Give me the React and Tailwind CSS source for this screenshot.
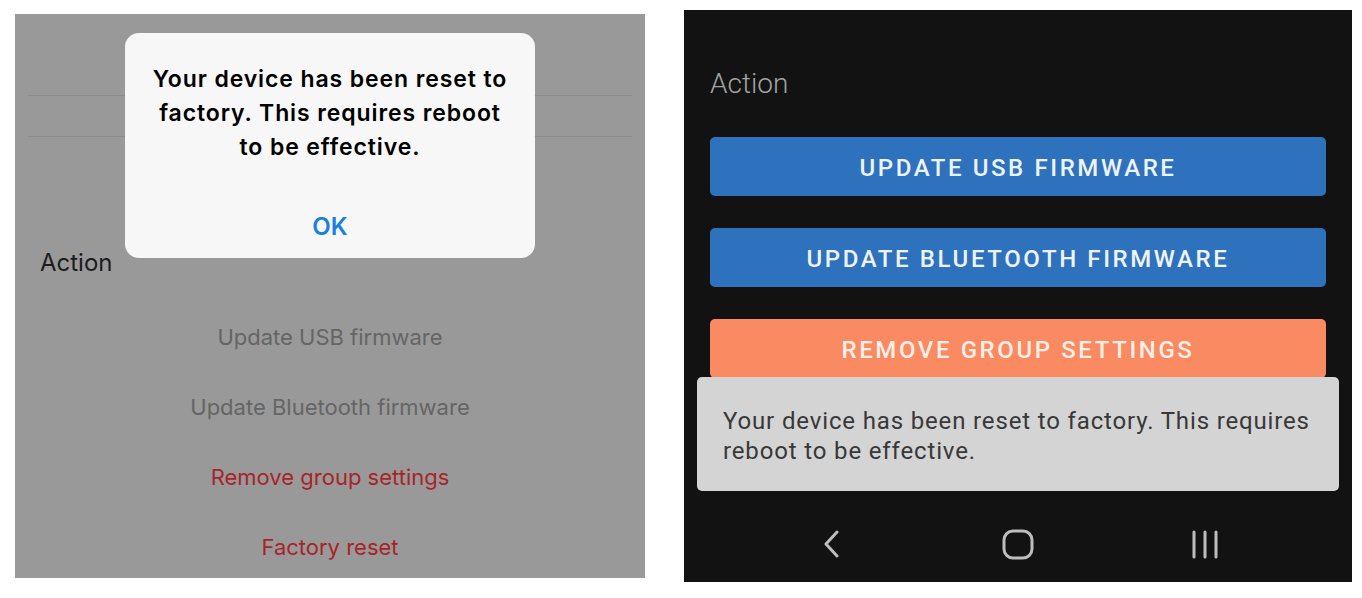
import React from 'react';

const iosFont = { fontFamily: 'Inter, "Liberation Sans", sans-serif' };
const androidFont = { fontFamily: 'Roboto, "Liberation Sans", sans-serif' };

// iOS screenshot: settings list dimmed behind an alert
const IosPanel = () => {
  const items = [
    { label: 'Update USB firmware', color: 'text-[#656565]' },
    { label: 'Update Bluetooth firmware', color: 'text-[#656565]' },
    { label: 'Remove group settings', color: 'text-[#a8242a]' },
    { label: 'Factory reset', color: 'text-[#a8242a]' },
  ];

  return (
    <div className="relative w-[630px] h-[564px] mt-[14px] bg-[#999999] overflow-hidden" style={iosFont}>
      <div className="h-[81px]" />
      <div className="mx-[13px] h-px bg-[#8b8b8b]" />
      <div className="h-[40px]" />
      <div className="mx-[13px] h-px bg-[#8b8b8b]" />

      <div className="mt-[111px] pl-[25px] text-[24px] leading-[30px] text-[#1c1c1c]">Action</div>

      <div className="mt-[24px] flex flex-col items-center">
        {items.map((item) => (
          <div key={item.label} className={`h-[70px] flex items-center text-[22px] ${item.color}`}>
            {item.label}
          </div>
        ))}
      </div>

      {/* Alert */}
      <div className="absolute left-[110px] top-[19px] w-[410px] h-[225px] rounded-[14px] bg-[#f7f7f7] flex flex-col items-center">
        <p className="pt-[29px] text-center text-[23px] leading-[34px] font-semibold text-black tracking-[0.9px] whitespace-nowrap">
          Your device has been reset to
          <br />
          factory. This requires reboot
          <br />
          to be effective.
        </p>
        <div className="mt-[46px] text-[24px] leading-[34px] font-semibold text-[#1a7fe3]">OK</div>
      </div>
    </div>
  );
};

const NavBack = () => (
  <svg width="20" height="28" viewBox="0 0 20 28" fill="none">
    <path d="M16 2 L5 14 L16 26" stroke="#bdbdbd" strokeWidth="3" strokeLinecap="round" strokeLinejoin="round" />
  </svg>
);

const NavHome = () => (
  <svg width="32" height="31" viewBox="0 0 32 31" fill="none">
    <rect x="2" y="2" width="28" height="27" rx="9" stroke="#bdbdbd" strokeWidth="3" />
  </svg>
);

const NavRecents = () => (
  <svg width="28" height="29" viewBox="0 0 28 29" fill="none">
    <path d="M3 2 V27 M14 2 V27 M25 2 V27" stroke="#bdbdbd" strokeWidth="3" strokeLinecap="round" />
  </svg>
);

// Android screenshot: buttons with a snackbar on top
const AndroidPanel = () => {
  const buttons = [
    { label: 'Update USB firmware', bg: 'bg-[#2e71bd]', text: 'text-[#eef3f9]' },
    { label: 'Update Bluetooth firmware', bg: 'bg-[#2e71bd]', text: 'text-[#eef3f9]' },
    { label: 'Remove group settings', bg: 'bg-[#f98a62]', text: 'text-[#fdeee6]' },
  ];

  return (
    <div className="relative w-[668px] h-[572px] mt-[10px] ml-[39px] bg-[#121212] flex flex-col overflow-hidden" style={androidFont}>
      <div className="flex-1">
        <div className="mt-[59px] pl-[26px] text-[28px] leading-[30px] font-light text-[#a3a3a3]">Action</div>

        <div className="mt-[38px] px-[26px] flex flex-col gap-[32px]">
          {buttons.map((b) => (
            <div
              key={b.label}
              className={`h-[59px] pt-[2px] rounded-[5px] flex items-center justify-center uppercase text-[24px] font-medium tracking-[2.6px] ${b.bg} ${b.text}`}
            >
              {b.label}
            </div>
          ))}
        </div>
      </div>

      {/* Navigation bar */}
      <div className="h-[76px] flex items-center justify-center">
        <div className="w-[187px] flex justify-center"><NavBack /></div>
        <div className="w-[187px] flex justify-center"><NavHome /></div>
        <div className="w-[187px] flex justify-center"><NavRecents /></div>
      </div>

      {/* Snackbar */}
      <div className="absolute left-[13px] right-[13px] top-[367px] h-[114px] rounded-[5px] bg-[#d4d4d4] pl-[26px] pr-4 pt-[29px]">
        <p className="text-[24px] leading-[30px] tracking-[0.85px] text-[#383838]">
          Your device has been reset to factory. This requires reboot to be effective.
        </p>
      </div>
    </div>
  );
};

export default function App() {
  return (
    <div className="w-[1362px] h-[598px] bg-white flex items-start pl-[15px]">
      <IosPanel />
      <AndroidPanel />
    </div>
  );
}
